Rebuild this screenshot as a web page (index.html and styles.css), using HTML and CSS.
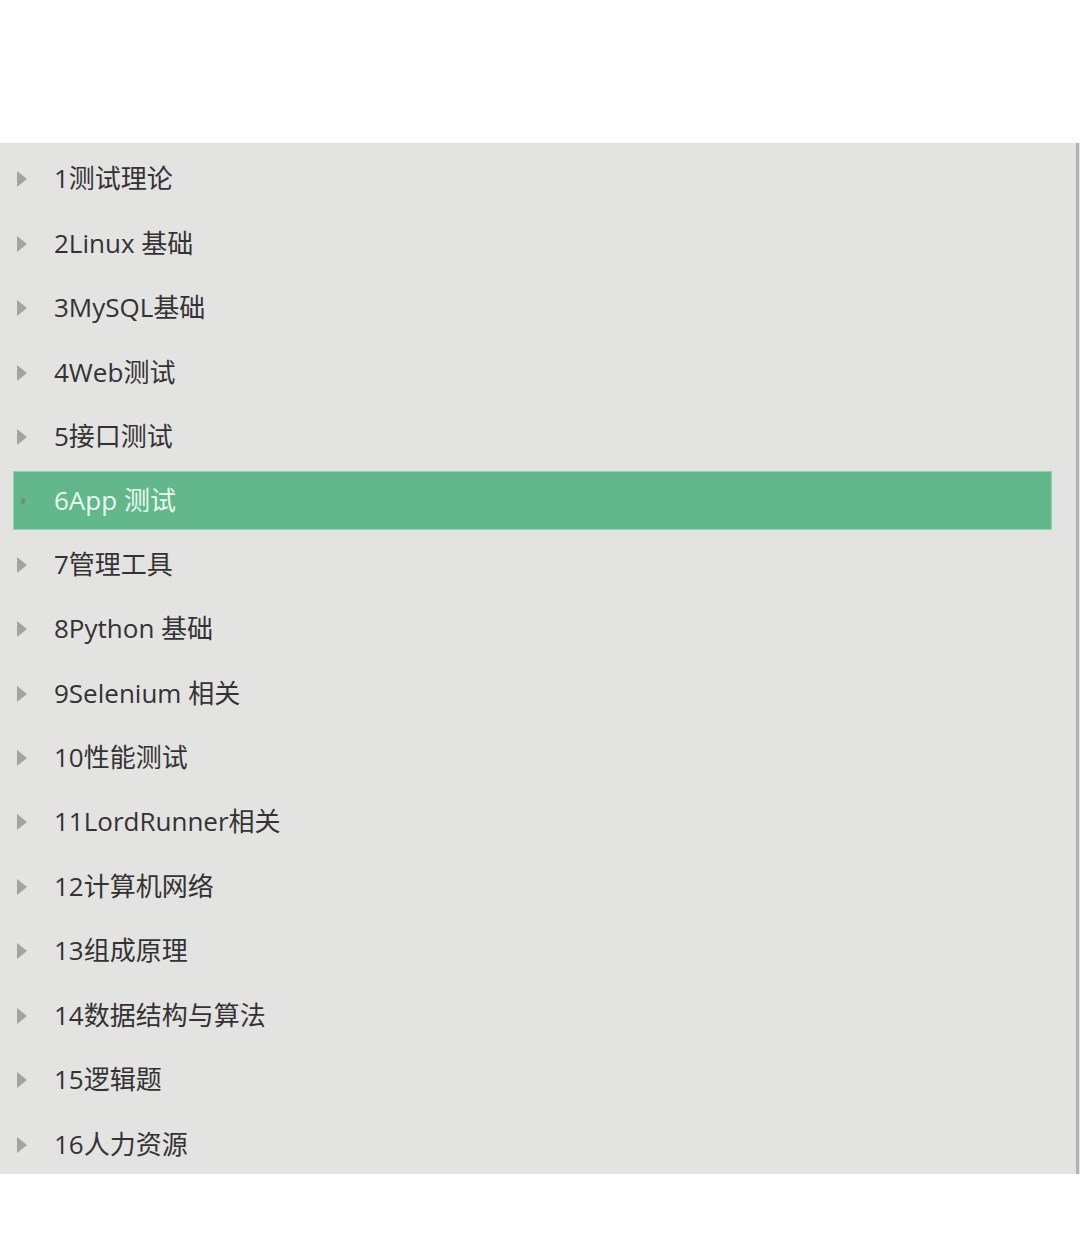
FILE: index.html
```html
<!DOCTYPE html>
<html lang="zh-CN">
<head>
  <meta charset="UTF-8">
  <meta name="viewport" content="width=device-width, initial-scale=1.0">
  <title>软件测试目录</title>
  <link rel="stylesheet" href="styles.css">
</head>
<body>
  <div class="top-space"></div>

  <!-- 目录树 -->
  <div class="tree">
    <ul class="tree-list">
      <li class="node"><span class="arrow"></span><span class="label">1测试理论</span></li>
      <li class="node"><span class="arrow"></span><span class="label">2Linux 基础</span></li>
      <li class="node"><span class="arrow"></span><span class="label">3MySQL基础</span></li>
      <li class="node"><span class="arrow"></span><span class="label">4Web测试</span></li>
      <li class="node"><span class="arrow"></span><span class="label">5接口测试</span></li>
      <li class="node selected"><span class="arrow"></span><span class="label">6App 测试</span></li>
      <li class="node"><span class="arrow"></span><span class="label">7管理工具</span></li>
      <li class="node"><span class="arrow"></span><span class="label">8Python 基础</span></li>
      <li class="node"><span class="arrow"></span><span class="label">9Selenium 相关</span></li>
      <li class="node"><span class="arrow"></span><span class="label">10性能测试</span></li>
      <li class="node"><span class="arrow"></span><span class="label">11LordRunner相关</span></li>
      <li class="node"><span class="arrow"></span><span class="label">12计算机网络</span></li>
      <li class="node"><span class="arrow"></span><span class="label">13组成原理</span></li>
      <li class="node"><span class="arrow"></span><span class="label">14数据结构与算法</span></li>
      <li class="node"><span class="arrow"></span><span class="label">15逻辑题</span></li>
      <li class="node"><span class="arrow"></span><span class="label">16人力资源</span></li>
    </ul>
    <div class="scrollbar"></div>
  </div>
</body>
</html>
```

FILE: styles.css
```css
body {
  margin: 0;
  background: #ffffff;
  font-family: "Open Sans", "Noto Sans CJK SC", sans-serif;
  color: #333333;
}

.top-space {
  height: 143px;
}

.tree {
  display: flex;
  height: 1031px;
  background: #e3e3e2;
  overflow: hidden;
}

.tree-list {
  flex: 1;
  list-style: none;
  margin: 0;
  padding: 4px 0 0 0;
}

.node {
  display: flex;
  align-items: center;
  height: 64.47px;
  font-size: 26px;
}

.arrow {
  width: 0;
  height: 0;
  margin-left: 17px;
  border-top: 8px solid transparent;
  border-bottom: 8px solid transparent;
  border-left: 10px solid #a3a3a3;
}

.label {
  margin-left: 27px;
  line-height: 1;
  padding-bottom: 2px;
}

.node.selected {
  margin: 2px 24px 2px 13px;
  height: 57px;
  background: #63b88b;
  border: 1px solid #8fd2ad;
  color: #eaf8ef;
}

.node.selected .arrow {
  margin-left: 7px;
  width: 4px;
  height: 6px;
  border: none;
  border-radius: 2px;
  background: #6f8f7c;
}

.node.selected .label {
  margin-left: 29px;
}

.scrollbar {
  width: 3px;
  margin-right: 1px;
  background: #b0b0b0;
}
```
